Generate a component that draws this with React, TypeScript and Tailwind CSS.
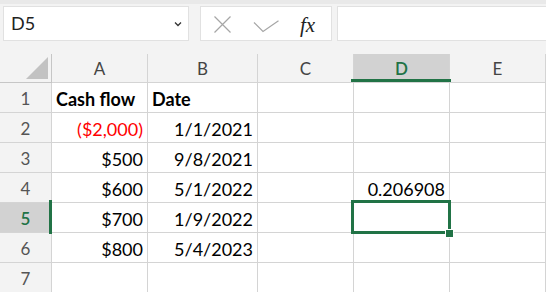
import React from "react";

const cols = ["A", "B", "C", "D", "E"];

type Cell = { t: string; cls?: string };
const rows: Cell[][] = [
  [{ t: "Cash flow", cls: "font-bold text-left" }, { t: "Date", cls: "font-bold text-left" }, { t: "" }, { t: "" }, { t: "" }],
  [{ t: "($2,000)", cls: "text-[#ff0000] text-right" }, { t: "1/1/2021", cls: "text-right" }, { t: "" }, { t: "" }, { t: "" }],
  [{ t: "$500", cls: "text-right" }, { t: "9/8/2021", cls: "text-right" }, { t: "" }, { t: "" }, { t: "" }],
  [{ t: "$600", cls: "text-right" }, { t: "5/1/2022", cls: "text-right" }, { t: "" }, { t: "0.206908", cls: "text-right" }, { t: "" }],
  [{ t: "$700", cls: "text-right" }, { t: "1/9/2022", cls: "text-right" }, { t: "" }, { t: "" }, { t: "" }],
  [{ t: "$800", cls: "text-right" }, { t: "5/4/2023", cls: "text-right" }, { t: "" }, { t: "" }, { t: "" }],
  [{ t: "" }, { t: "" }, { t: "" }, { t: "" }, { t: "" }],
];

export default function App() {
  return (
    <div
      className="relative w-[546px] h-[292px] overflow-hidden bg-[#f3f3f3]"
      style={{ fontFamily: "Lato, 'Open Sans', sans-serif" }}
    >
      {/* formula bar */}
      <div className="h-[4px] bg-[#e9e9e9]" />
      <div className="flex h-[50px] pl-[3px] pt-[2px]">
        <div className="flex items-center justify-between w-[186px] h-[35px] bg-white border border-[#e1e1e1] pl-[7px] pr-[6px]">
          <span className="text-[18px] text-[#222]">D5</span>
          <svg width="8" height="6" viewBox="0 0 8 6">
            <path d="M1 1.5 L4 4.5 L7 1.5" fill="none" stroke="#333" strokeWidth="1.3" />
          </svg>
        </div>
        <div className="relative ml-[11px] w-[132px] h-[35px] bg-white border border-[#e1e1e1]">
          <svg className="absolute left-[12px] top-[8px]" width="19" height="19" viewBox="0 0 19 19">
            <path d="M1.5 1.5 L17.5 17.5 M17.5 1.5 L1.5 17.5" stroke="#a6a6a6" strokeWidth="1.2" fill="none" />
          </svg>
          <svg className="absolute left-[52px] top-[13px]" width="27" height="15" viewBox="0 0 27 15">
            <path d="M1 2.5 L10 11.5 L25.5 0.8" stroke="#a6a6a6" strokeWidth="1.2" fill="none" />
          </svg>
          <span
            className="absolute left-[99px] top-[3px] text-[21px] italic text-[#222]"
            style={{ fontFamily: "'Liberation Serif', serif" }}
          >
            fx
          </span>
        </div>
        <div className="ml-[5px] flex-1 h-[35px] bg-white border border-r-0 border-[#e1e1e1]" />
      </div>

      {/* grid */}
      <div className="grid grid-cols-[52px_96px_110px_96px_96px_96px] bg-white">
        {/* header row */}
        <div className="relative h-[29px] bg-[#f3f3f3] border-r border-b border-[#c6c6c6]">
          <svg className="absolute left-[26px] top-[3px]" width="22" height="22" viewBox="0 0 22 22">
            <path d="M22 0 L22 22 L0 22 Z" fill="#c2c2c2" />
          </svg>
        </div>
        {cols.map((c) => (
          <div
            key={c}
            className={`h-[29px] flex items-center justify-center border-r border-b border-[#d4d4d4] text-[17px] ${
              c === "D" ? "bg-[#d2d2d2] text-[#217346] font-semibold" : "bg-[#f3f3f3] text-[#444]"
            }`}
          >
            <span className="mt-[2px]">{c}</span>
          </div>
        ))}
        {rows.map((r, i) => (
          <React.Fragment key={i}>
            <div
              className={`h-[30px] flex items-center justify-center border-r border-b border-[#d4d4d4] text-[17px] ${
                i === 4 ? "bg-[#d2d2d2] text-[#217346] font-semibold" : "bg-[#f3f3f3] text-[#555]"
              }`}
            >
              <span className="mt-[3px]">{i + 1}</span>
            </div>
            {r.map((cell, j) => {
              const right = cell.cls?.includes("text-right");
              const red = cell.cls?.includes("ff0000");
              return (
                <div
                  key={j}
                  className={`h-[30px] flex items-end border-r border-b border-[#d4d4d4] px-[4px] pb-[1px] text-[18px] leading-[24px] ${
                    red ? "text-[#ff0000]" : "text-black"
                  } ${cell.cls?.includes("font-bold") ? "font-bold" : ""} ${right ? "justify-end" : "justify-start"}`}
                >
                  {cell.t}
                </div>
              );
            })}
          </React.Fragment>
        ))}
      </div>

      {/* selection overlays */}
      <div className="absolute left-[351px] top-[79px] w-[100px] h-[3px] bg-[#217346]" />
      <div className="absolute left-[49px] top-[200px] w-[3px] h-[34px] bg-[#217346]" />
      <div className="absolute left-[351px] top-[200px] w-[100px] h-[34px] border-[3px] border-[#217346]" />
      <div className="absolute left-[445px] top-[229px] w-[9px] h-[9px] bg-[#217346] border border-white" />
    </div>
  );
}
